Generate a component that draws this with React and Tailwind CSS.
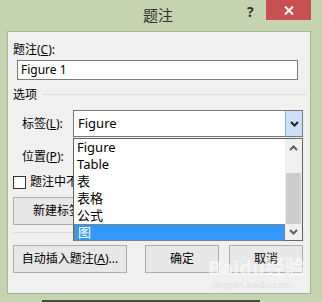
import React from 'react';

const FONT = { fontFamily: '"Noto Sans", "Noto Sans CJK SC", sans-serif' };

function Btn({ children, className = '' }) {
  return (
    <div className={`h-[28px] border border-[#adadad] bg-[#e8e8e8] flex items-center justify-center text-[12px] text-black ${className}`}>
      {children}
    </div>
  );
}

function App() {
  const items = ['Figure', 'Table', '表', '表格', '公式'];
  return (
    <div className="w-[322px] h-[302px] bg-[#c5d4b0] relative overflow-hidden" style={FONT}>
      {/* Title bar */}
      <div className="h-[31px] flex items-start relative">
        <div className="absolute left-0 w-[316px] top-[5px] text-center text-[15px] leading-[20px] text-[#333]">题注</div>
        <div className="absolute left-[247px] top-[3px] text-[14px] font-bold leading-[18px] text-[#333]">?</div>
        <div className="absolute left-[266px] top-0 w-[45px] h-[20px] bg-[#c75050] flex items-center justify-center">
          <svg width="10" height="9" viewBox="0 0 10 9">
            <path d="M1 0.5 L9 8.5 M9 0.5 L1 8.5" stroke="#fff" strokeWidth="2" />
          </svg>
        </div>
      </div>

      {/* Client area */}
      <div className="ml-[7px] w-[304px] h-[263px] bg-[#f0f0f0] border border-[#a6b596] relative text-[12px] text-black">
        <div className="px-[5px]">
          <div className="mt-[10px] h-[15px] leading-[15px]">题注(<u>C</u>):</div>
          <div className="mt-[3px] ml-[4px] w-[281px] h-[20px] bg-white border border-[#7a7a7a] pl-[3px] leading-[18px]">Figure 1</div>

          <div className="mt-[7px] flex items-center h-[15px]">
            <span className="leading-[15px]">选项</span>
            <div className="ml-[6px] flex-1 h-px bg-[#dcdcdc] mr-[-1px]"></div>
          </div>

          <div className="mt-[8px] flex items-center h-[27px]">
            <span className="ml-[9px] w-[51px]">标签(<u>L</u>):</span>
            <div className="w-[230px] h-[27px] bg-white border border-[#7a7a7a] flex items-center">
              <span className="flex-1 pl-[4px] text-[13px]">Figure</span>
              <div className="w-[17px] h-[25px] bg-[#c9e0f7] border-l border-[#7eb4ea] flex items-center justify-center">
                <svg width="9" height="6" viewBox="0 0 9 6">
                  <path d="M1 1 L4.5 4.5 L8 1" stroke="#222" strokeWidth="2" fill="none" />
                </svg>
              </div>
            </div>
          </div>

          <div className="mt-[12px] ml-[9px] h-[15px] leading-[15px]">位置(<u>P</u>):</div>

          <div className="mt-[11px] flex items-center h-[14px]">
            <div className="w-[13px] h-[13px] bg-white border border-[#333]"></div>
            <span className="ml-[4px] leading-[14px] whitespace-nowrap">题注中不包含标签(E)</span>
          </div>

          <Btn className="mt-[8px] w-[114px] whitespace-nowrap">新建标签(N)...</Btn>

          <div className="mt-[7px] h-px bg-[#dcdcdc]"></div>

          <div className="mt-[12px] flex">
            <Btn className="w-[114px]">自动插入题注(<u>A</u>)...</Btn>
            <Btn className="ml-[18px] w-[74px]">确定</Btn>
            <Btn className="ml-[10px] w-[74px]">取消</Btn>
          </div>
        </div>

        {/* Watermark */}
        <div className="absolute left-[200px] top-[224px] text-[20px] font-bold leading-[24px] text-white/60 whitespace-nowrap">Baidu经验</div>
        <div className="absolute left-[205px] top-[248px] text-[9px] leading-[10px] text-[#dedede] whitespace-nowrap">jingyan.baidu.com</div>

        {/* Dropdown list */}
        <div className="absolute left-[65px] top-[106px] w-[230px] h-[103px] bg-white border border-[#646464] flex">
          <div className="flex-1 flex flex-col">
            {items.map((t) => (
              <div key={t} className="h-[17px] pl-[3px] leading-[17px] text-[13px]">{t}</div>
            ))}
            <div className="h-[17px] pl-[3px] leading-[15px] text-[13px] bg-[#3399ff] text-white border border-dotted border-[#c86a1e]">图</div>
          </div>
          <div className="w-[17px] bg-[#f0f0f0] flex flex-col">
            <div className="h-[17px] flex items-center justify-center">
              <svg width="9" height="6" viewBox="0 0 9 6">
                <path d="M1 5 L4.5 1.5 L8 5" stroke="#606060" strokeWidth="2" fill="none" />
              </svg>
            </div>
            <div className="h-[17px]"></div>
            <div className="mx-[1px] h-[51px] bg-[#cdcdcd]"></div>
            <div className="flex-1 flex items-center justify-center">
              <svg width="9" height="6" viewBox="0 0 9 6">
                <path d="M1 1 L4.5 4.5 L8 1" stroke="#606060" strokeWidth="2" fill="none" />
              </svg>
            </div>
          </div>
        </div>
      </div>

      <div className="mt-[6px] ml-[42px] w-[218px] h-[4px] bg-[#4a4d3c]"></div>
    </div>
  );
}

export default App;
